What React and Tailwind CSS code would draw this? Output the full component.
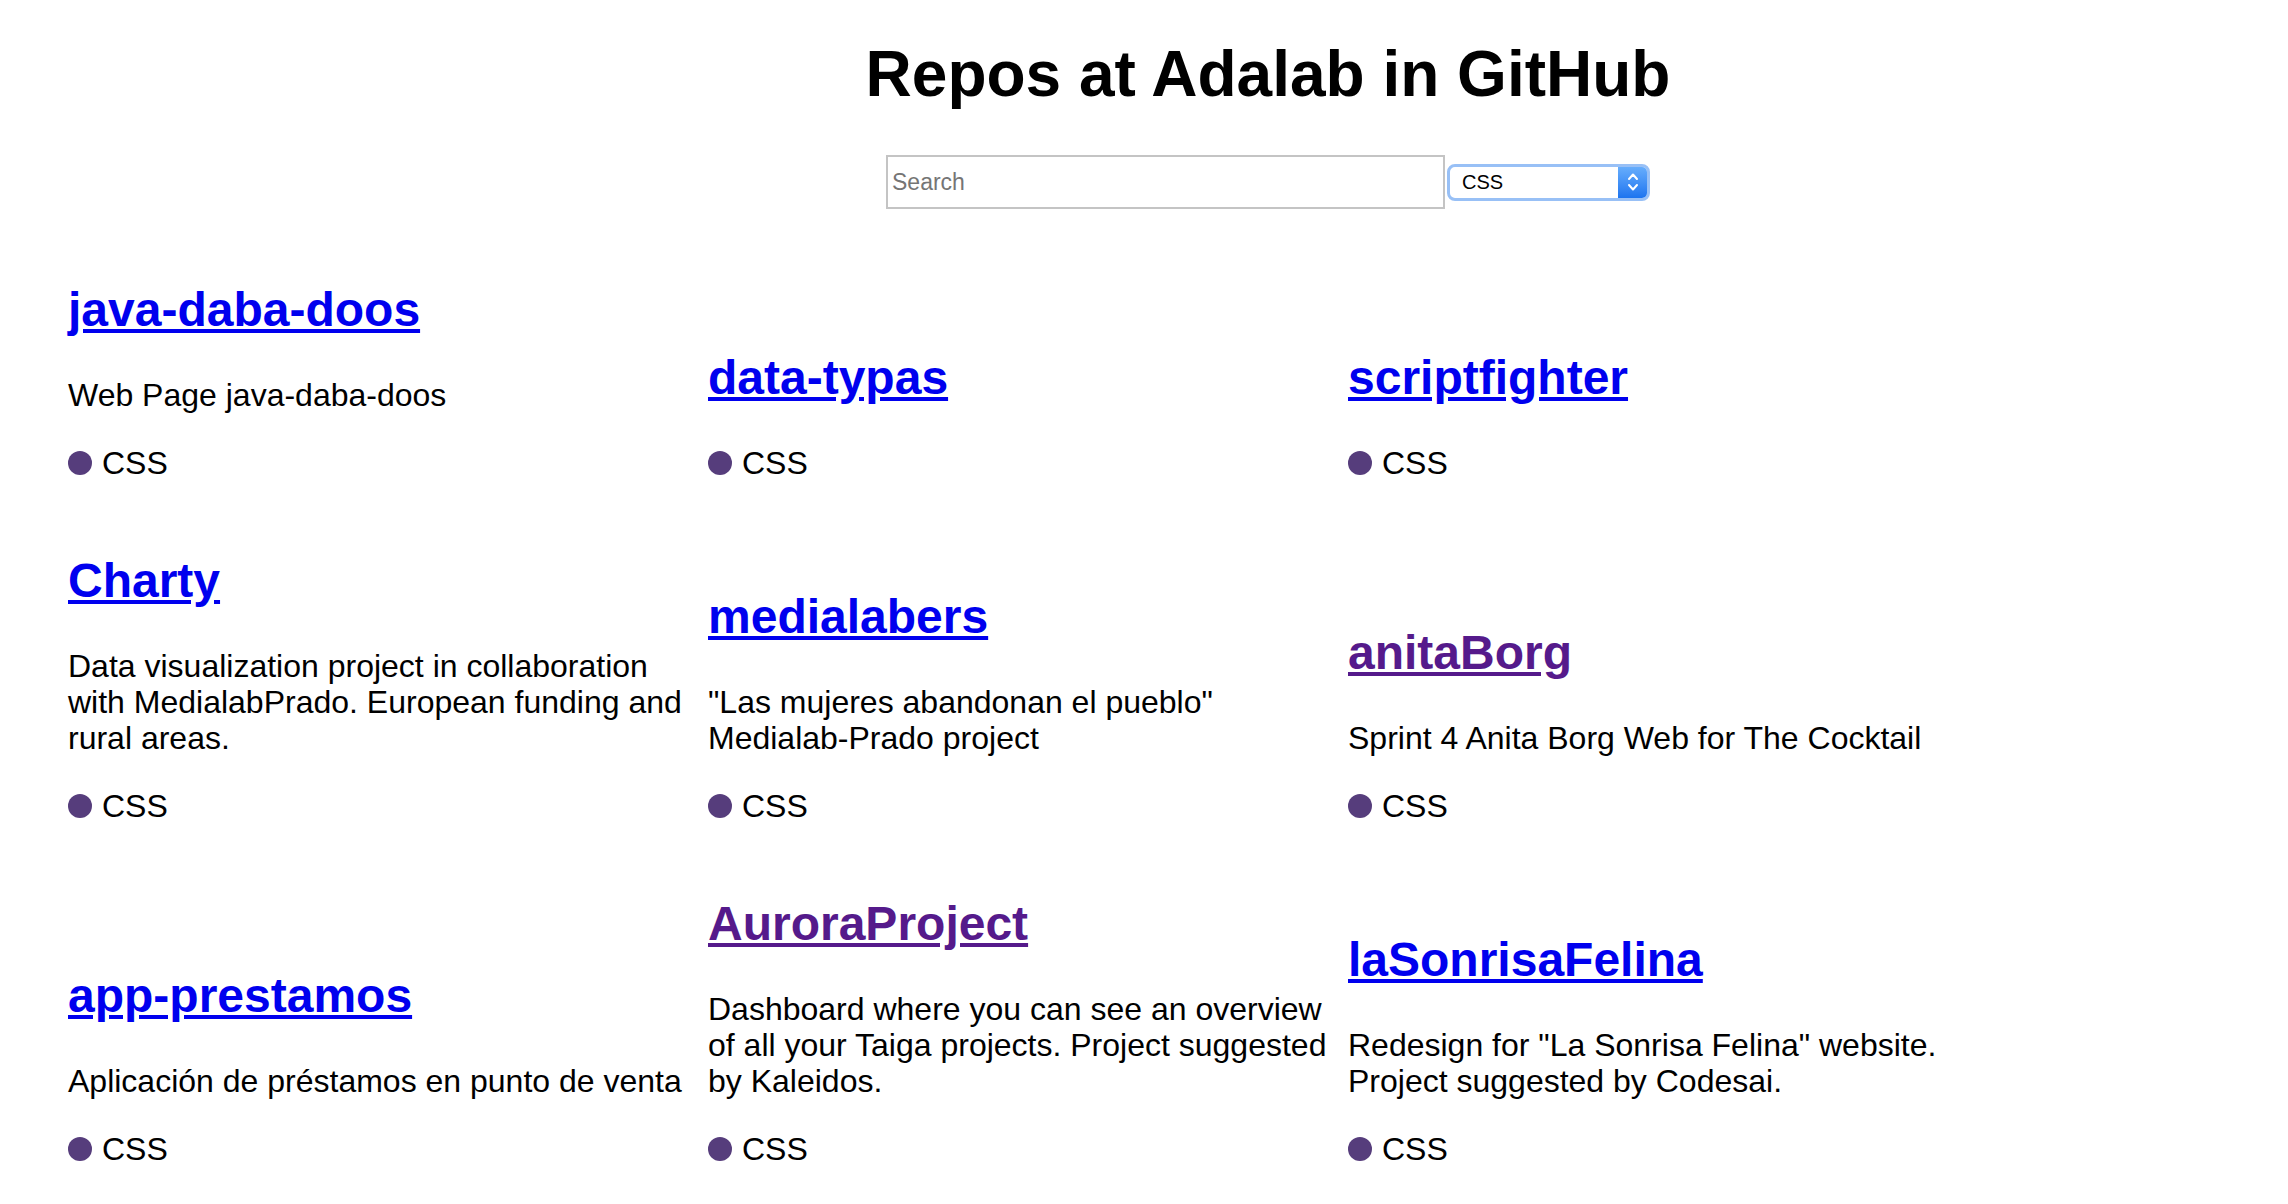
import React from "react";

const repos = [
  { name: "java-daba-doos", desc: "Web Page java-daba-doos" },
  { name: "data-typas" },
  { name: "scriptfighter" },
  {
    name: "Charty",
    desc: "Data visualization project in collaboration with MedialabPrado. European funding and rural areas.",
  },
  { name: "medialabers", desc: '"Las mujeres abandonan el pueblo" Medialab-Prado project' },
  { name: "anitaBorg", desc: "Sprint 4 Anita Borg Web for The Cocktail", visited: true },
  { name: "app-prestamos", desc: "Aplicación de préstamos en punto de venta" },
  {
    name: "AuroraProject",
    desc: "Dashboard where you can see an overview of all your Taiga projects. Project suggested by Kaleidos.",
    visited: true,
  },
  { name: "laSonrisaFelina", desc: 'Redesign for "La Sonrisa Felina" website. Project suggested by Codesai.' },
];

function Repo({ repo }) {
  return (
    <div className="pt-[40px] pb-[32px]">
      <h2 className="text-[48px] leading-[55px] font-bold">
        <a
          href="#"
          className={
            repo.visited
              ? "text-[#551A8B] underline decoration-[#551A8B]"
              : "text-[#0000EE] underline decoration-[#0000EE]"
          }
        >
          {repo.name}
        </a>
      </h2>
      {repo.desc && <p className="mt-[40px] text-[32px] leading-[36px] text-black">{repo.desc}</p>}
      <div className={(repo.desc ? "mt-[32px]" : "mt-[40px]") + " flex items-center text-[32px] leading-[36px] text-black"}>
        <span className="w-[24px] h-[24px] rounded-full bg-[#563d7c] mr-[10px]"></span>
        <span>CSS</span>
      </div>
    </div>
  );
}

export default function App() {
  return (
    <div className="min-h-[1204px] bg-white text-black font-['Liberation_Sans',Arial,sans-serif]">
      <header className="pl-[248px] flex flex-col items-center">
        <h1 className="mt-[38px] text-[64px] leading-[72px] font-bold">Repos at Adalab in GitHub</h1>
        <div className="mt-[45px] flex items-center">
          <input
            type="text"
            placeholder="Search"
            className="w-[559px] h-[54px] border-2 border-[#c4c4c4] bg-white pl-[4px] text-[23px] text-black placeholder:text-[#757575] outline-none font-['Liberation_Sans',Arial,sans-serif]"
          />
          <div className="ml-[2px] w-[203px] h-[37px] rounded-[8px] border-[3px] border-[#98c0f6] bg-white flex items-center justify-between overflow-hidden">
            <span className="pl-[12px] text-[20px] leading-none text-black">CSS</span>
            <div className="w-[29px] h-full bg-linear-to-b from-[#66adfc] to-[#1c74ef] flex items-center justify-center">
              <svg width="14" height="24" viewBox="0 0 14 24" fill="none" stroke="white" strokeWidth="2" strokeLinecap="round" strokeLinejoin="round">
                <path d="M3 9 L7 4.5 L11 9" />
                <path d="M3 15 L7 19.5 L11 15" />
              </svg>
            </div>
          </div>
        </div>
      </header>
      <main className="mt-[33px] pl-[68px] grid grid-cols-[640px_640px_640px] items-end">
        {repos.map((r) => (
          <Repo key={r.name} repo={r} />
        ))}
      </main>
    </div>
  );
}
